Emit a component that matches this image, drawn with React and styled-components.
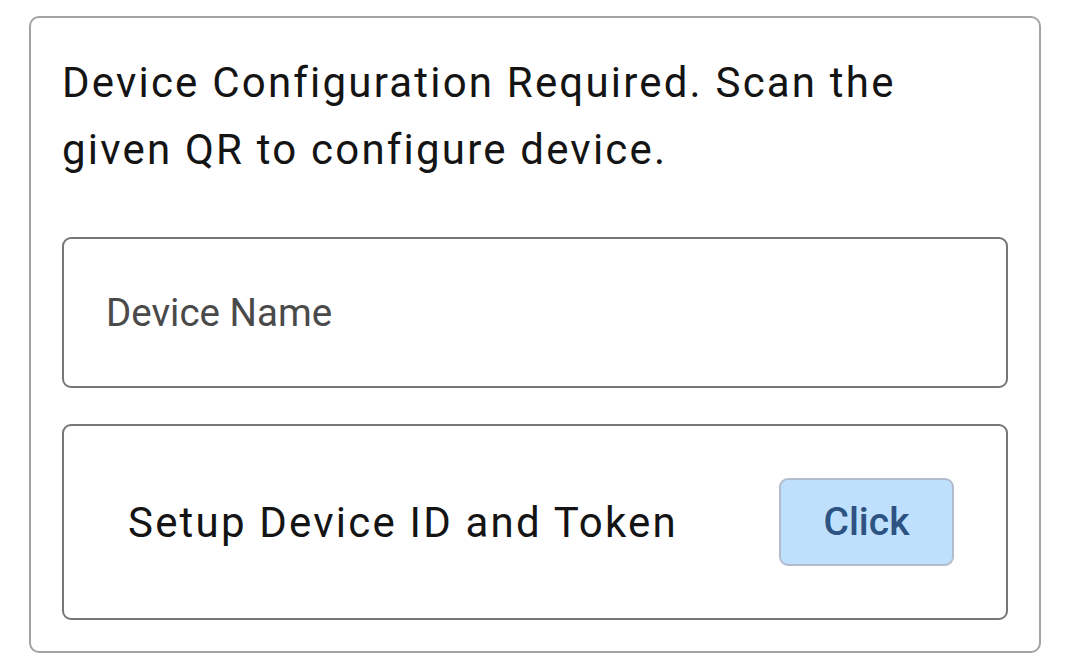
import styled, { createGlobalStyle } from "styled-components";

const GlobalStyle = createGlobalStyle`
    html, body {
        margin: 0;
        padding: 0;
        background: #fff;
    }
    body {
        font-family: Roboto, "Noto Sans", "Liberation Sans", sans-serif;
        color: #111;
    }
`

const Page = styled('div')`
    padding: 16px 26px 0 29px;
`

const Card = styled('section')`
    box-sizing: border-box;
    width: 1012px;
    border: 2px solid #a3a3a3;
    border-radius: 10px;
    padding: 31px;
    display: flex;
    flex-direction: column;
`

const Heading = styled('p')`
    margin: 0 0 54px 0;
    font-size: 42px;
    line-height: 67px;
    letter-spacing: 2.2px;
    color: #141414;
`

const Field = styled('div')`
    box-sizing: border-box;
    height: ${(p) => p.h}px;
    border: 2.5px solid #767676;
    border-radius: 9px;
    display: flex;
    align-items: center;
    justify-content: space-between;
    padding: ${(p) => p.pad};
    margin-bottom: ${(p) => p.mb || 0}px;
`

const Label = styled('span')`
    font-size: 38.5px;
    color: #4a4a4a;
    letter-spacing: 0;
`

const Title = styled('span')`
    font-size: 42px;
    color: #141414;
    letter-spacing: 2.2px;
`

const Button = styled('button')`
    box-sizing: border-box;
    width: 175px;
    height: 88px;
    border: 2.5px solid #b3bccb;
    border-radius: 9px;
    background: #bee0fc;
    color: #2d5383;
    font-family: Roboto, "Noto Sans", sans-serif;
    font-weight: 500;
    font-size: 39px;
    cursor: pointer;
`

const App = () => {
    return (
        <Page>
            <GlobalStyle />
            <Card>
                <Heading>
                    Device Configuration Required. Scan the given QR to configure device.
                </Heading>
                <Field h={151} mb={36} pad="0 0 0 42px">
                    <Label>Device Name</Label>
                </Field>
                <Field h={196} pad="0 52px 0 64px">
                    <Title>Setup Device ID and Token</Title>
                    <Button>Click</Button>
                </Field>
            </Card>
        </Page>
    );
}

export default App;
